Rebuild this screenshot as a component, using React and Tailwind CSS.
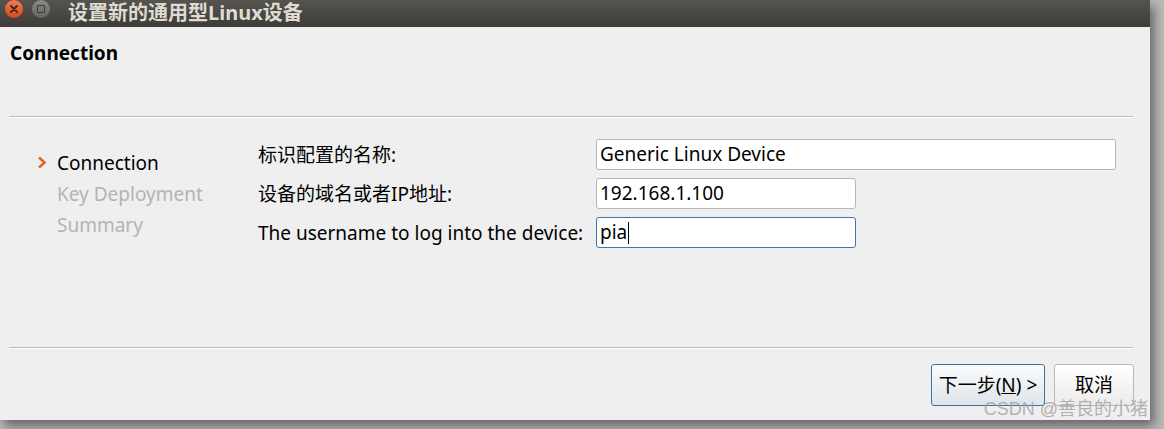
const FONT = { fontFamily: '"Noto Sans", "Noto Sans CJK SC", sans-serif' };

const STEPS = [
  { label: 'Connection', active: true },
  { label: 'Key Deployment' },
  { label: 'Summary' },
];

const FIELDS = [
  { label: '标识配置的名称:', value: 'Generic Linux Device', width: 'w-[520px]' },
  { label: '设备的域名或者IP地址:', value: '192.168.1.100', width: 'w-[260px]' },
  { label: 'The username to log into the device:', value: 'pia', width: 'w-[260px]', focused: true },
];

function Separator() {
  return (
    <div className="mx-[9px] mr-[17px]">
      <div className="h-px bg-[#bcbcbc]" />
      <div className="h-px bg-white" />
    </div>
  );
}

export default function App() {
  return (
    <div className="w-[1164px] h-[429px] bg-[#b9b9b9] overflow-hidden" style={FONT}>
      <div className="w-[1150px] h-[420px] bg-[#efefef] flex flex-col shadow-[4px_6px_10px_rgba(0,0,0,0.45)]">
        {/* Title bar */}
        <div className="h-[27px] shrink-0 flex items-start bg-gradient-to-b from-[#55544f] to-[#3d3c38]">
          <div className="ml-[5px] w-[18px] h-[18px] rounded-full bg-gradient-to-b from-[#f27a4d] to-[#d8471d] flex items-center justify-center">
            <svg width="8" height="8" viewBox="0 0 8 8">
              <path d="M1 1 L7 7 M7 1 L1 7" stroke="#3a2a22" strokeWidth="1.8" strokeLinecap="round" />
            </svg>
          </div>
          <div className="ml-[9px] w-[18px] h-[18px] rounded-full bg-gradient-to-b from-[#8b8a85] to-[#65645f] flex items-center justify-center">
            <div className="w-[8px] h-[8px] border border-[#3c3b37] rounded-[1px]" />
          </div>
          <span className="ml-[18px] mt-[1px] text-[20px] leading-[24px] font-bold text-[#dfdbd2]">
            设置新的通用型Linux设备
          </span>
        </div>

        {/* Page heading */}
        <div className="h-[89px] shrink-0 pl-[10px] pt-[13px]">
          <h1 className="text-[19px] leading-[26px] font-bold text-black">Connection</h1>
        </div>
        <Separator />

        {/* Body */}
        <div className="flex h-[229px] shrink-0">
          <div className="w-[258px] shrink-0 pt-[29px] pl-[37px]">
            {STEPS.map(s => (
              <div key={s.label} className="flex items-center h-[31px]">
                <div className="w-[20px] flex items-center">
                  {s.active && (
                    <svg width="10" height="13" viewBox="0 0 10 13">
                      <path d="M2 1.5 L7.5 6.5 L2 11.5" fill="none" stroke="#e2632b" strokeWidth="2.6" strokeLinejoin="miter" />
                    </svg>
                  )}
                </div>
                <span className={`text-[19px] leading-[24px] ${s.active ? 'text-black' : 'text-[#b4b4b4]'}`}>
                  {s.label}
                </span>
              </div>
            ))}
          </div>

          <div className="pt-[21px] flex flex-col gap-[8px]">
            {FIELDS.map(f => (
              <div key={f.label} className="flex items-center h-[31px]">
                <label className="w-[338px] shrink-0 text-[19px] leading-[24px] text-black">{f.label}</label>
                <div
                  className={`${f.width} h-[31px] bg-white rounded-[3px] border flex items-center pl-[3px] text-[19px] text-black ${
                    f.focused ? 'border-[#3e79ae]' : 'border-[#b6b6b6]'
                  }`}
                >
                  {f.value}
                  {f.focused && <span className="w-px h-[22px] bg-black ml-[1px]" />}
                </div>
              </div>
            ))}
          </div>
        </div>

        <Separator />

        {/* Buttons */}
        <div className="relative flex justify-end gap-[9px] pr-[16px] pt-[15px]">
          <button className="w-[114px] h-[42px] rounded-[3px] border border-[#3a72a6] bg-gradient-to-b from-[#fbfcfd] to-[#dde4eb] text-[19px] text-black">
            下一步(<span className="underline">N</span>) &gt;
          </button>
          <button className="w-[80px] h-[42px] rounded-[3px] border border-[#b9b9b9] bg-gradient-to-b from-[#ffffff] to-[#ebebeb] text-[19px] text-black">
            取消
          </button>
          <span
            className="absolute right-[2px] top-[49px] text-[18px] leading-[22px] text-[#a0a0a0]/80"
            style={{ fontFamily: '"Liberation Sans", "Noto Sans CJK SC", sans-serif' }}
          >
            CSDN @善良的小猪
          </span>
        </div>
      </div>
    </div>
  );
}
